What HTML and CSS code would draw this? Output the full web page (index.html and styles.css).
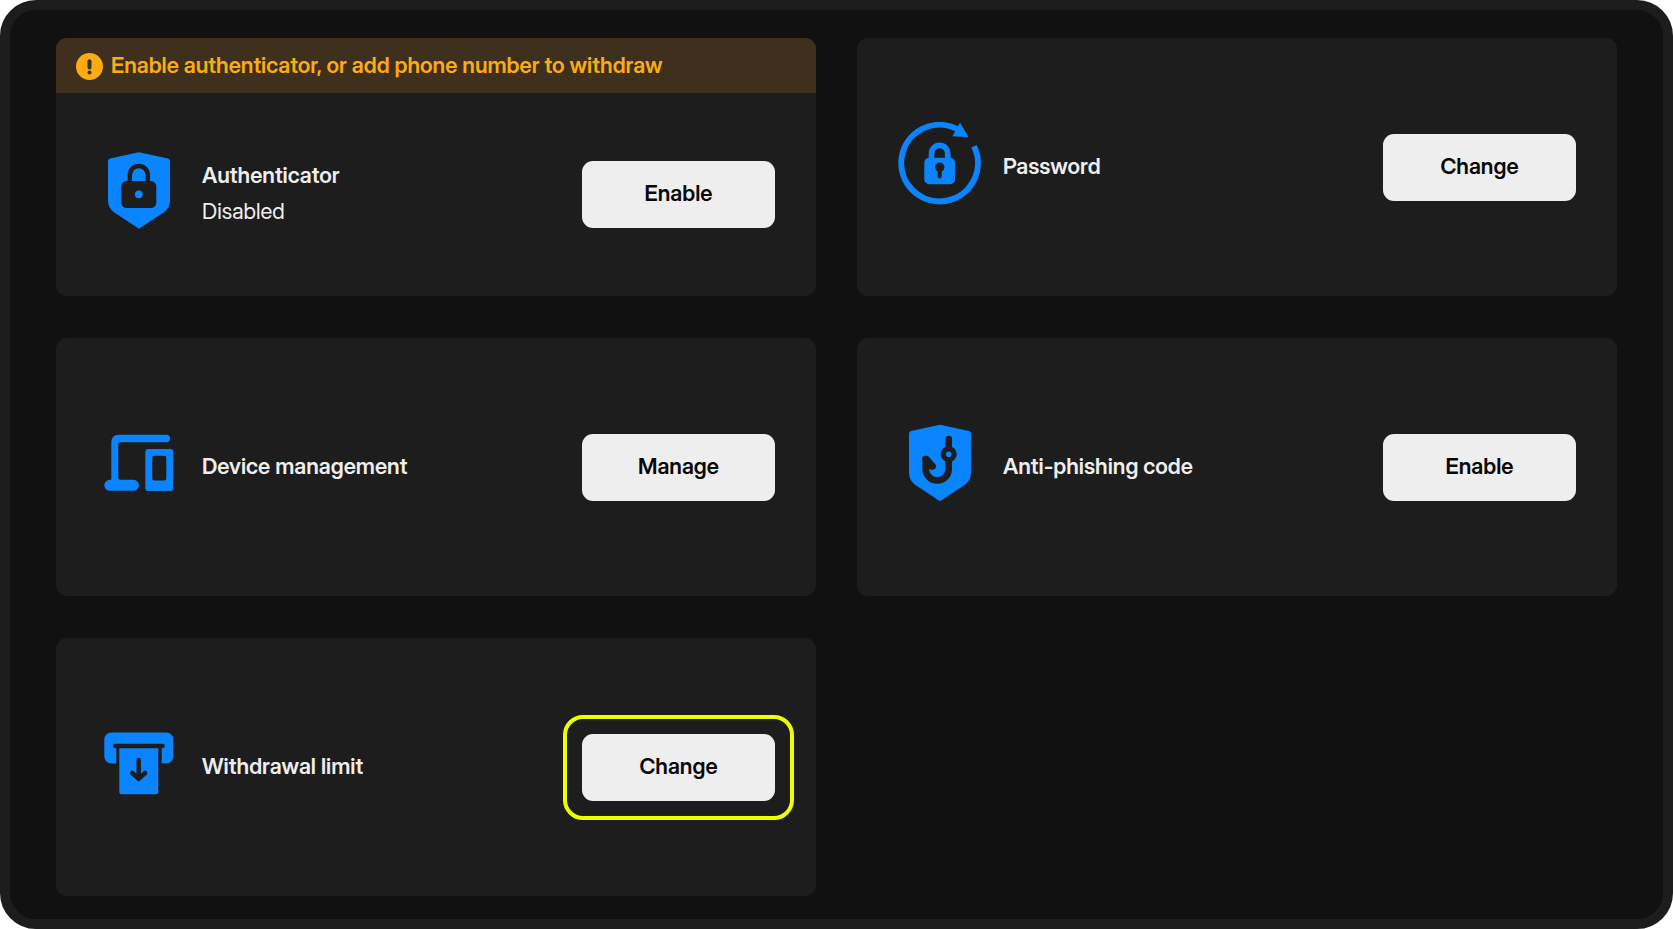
FILE: index.html
```html
<!DOCTYPE html>
<html lang="en">
<head>
    <meta charset="UTF-8">
    <meta name="viewport" content="width=device-width, initial-scale=1">
    <title>Security settings</title>
    <link rel="stylesheet" href="styles.css">
</head>
<body>
    <main class="panel">

        <section class="card">
            <div class="notice">
                <svg class="notice-icon" viewBox="0 0 27 27" aria-hidden="true">
                    <circle cx="13.5" cy="13.5" r="13.5" fill="#fcac13"/>
                    <path d="M13.5 8.2v6.2" stroke="#3f301e" stroke-width="4" stroke-linecap="round"/>
                    <circle cx="13.5" cy="19.4" r="2" fill="#3f301e"/>
                </svg>
                <span>Enable authenticator, or add phone number to withdraw</span>
            </div>
            <div class="card-body">
                <svg class="icon" viewBox="0 0 83 83" aria-hidden="true">
                    <path class="fill" d="M41.9 3.3 71 9.6q2 .6 2 2.6v39.3q0 7-6 11.8L42 79.7 17 63.3q-6-4.8-6-11.8V12.2q0-2 2-2.6z"/>
                    <path class="cut-line" stroke-width="4.4" d="M32.8 34v-8a9 9 0 0 1 18 0v8"/>
                    <rect class="cut" x="24.3" y="32" width="35" height="27" rx="5.5"/>
                    <circle class="fill" cx="41.8" cy="45.3" r="3.9"/>
                </svg>
                <div class="text">
                    <h2>Authenticator</h2>
                    <p>Disabled</p>
                </div>
                <button type="button">Enable</button>
            </div>
        </section>

        <section class="card">
            <div class="card-body">
                <svg class="icon" viewBox="0 0 83 83" aria-hidden="true">
                    <path class="line" stroke-width="6" d="M76 24.3A38.3 38.3 0 1 1 59 7"/>
                    <path class="fill" d="M62 .6 70.5 15.2 54.500 14.2z"/>
                    <path class="line" stroke-width="5.6" d="M33.5 38v-6.5a8.1 8.1 0 0 1 16.2 0V38"/>
                    <rect class="fill" x="26.3" y="35.7" width="30.7" height="26.5" rx="5"/>
                    <circle class="cut" cx="41.7" cy="45.3" r="4.7"/>
                    <path class="cut-line" stroke-width="4" d="M41.7 47v7.5"/>
                </svg>
                <div class="text">
                    <h2>Password</h2>
                </div>
                <button type="button">Change</button>
            </div>
        </section>

        <section class="card">
            <div class="card-body">
                <svg class="icon" viewBox="0 0 83 83" aria-hidden="true">
                    <path class="fill" d="M22 12.8h47.3a3.75 3.75 0 0 1 0 7.5H23.3q-2 0-2 2v33.5q0 2 2 2h13.2a5.5 5.5 0 0 1 0 11H12.8a5.5 5.5 0 0 1 0-11h1.5V20.5q0-7.7 7.7-7.7z"/>
                    <rect class="fill" x="48.3" y="27" width="28" height="42" rx="3"/>
                    <rect class="cut" x="55.3" y="33.8" width="14" height="24.7" rx="2"/>
                </svg>
                <div class="text">
                    <h2>Device management</h2>
                </div>
                <button type="button">Manage</button>
            </div>
        </section>

        <section class="card">
            <div class="card-body">
                <svg class="icon" viewBox="0 0 83 83" aria-hidden="true">
                    <path class="fill" d="M41.9 2.8 71 9.1q2 .6 2 2.6V51q0 7-6 11.8L42 79.2 17 62.8Q11 58 11 51V11.7q0-2 2-2.6z"/>
                    <path class="cut-line" stroke-width="6.7" d="M50.7 17v30a11.5 11.5 0 0 1-23 0V37"/>
                    <path class="cut" d="M24.3 37q0-3.3 3.7-3.3 1.8 0 3 1.3l6.7 7.8q1.2 2-.4 3.6-2.3 1.8-4.4 1l-2.9-.6z"/>
                    <circle class="cut" cx="50.7" cy="32.2" r="8"/>
                    <circle class="fill" cx="50.7" cy="32.2" r="2.8"/>
                </svg>
                <div class="text">
                    <h2>Anti-phishing code</h2>
                </div>
                <button type="button">Enable</button>
            </div>
        </section>

        <section class="card">
            <div class="card-body">
                <svg class="icon" viewBox="0 0 83 83" aria-hidden="true">
                    <path class="fill" d="M14.3 10.5h55a7 7 0 0 1 7 7v17a7 7 0 0 1-7 7h-4.6V26H19.3v15.5h-5a7 7 0 0 1-7-7v-17a7 7 0 0 1 7-7z"/>
                    <path class="cut-line" stroke-width="4.3" d="M18.2 24h47.4"/>
                    <path class="fill" d="M22.3 26.2h39v43.5q0 2.500-2.500 2.500h-34q-2.500 0-2.500-2.500z"/>
                    <path class="cut-line" stroke-width="4.5" d="M41.7 38v18M35.3 51l6.4 5.8 6.4-5.8"/>
                </svg>
                <div class="text">
                    <h2>Withdrawal limit</h2>
                </div>
                <button type="button" class="highlight">Change</button>
            </div>
        </section>

    </main>
</body>
</html>
```
FILE: styles.css
```css
* {
    box-sizing: border-box;
}

body {
    margin: 0;
    background: #fff;
    color: #eee;
    font-family: "Inter Display", Inter, "Liberation Sans", sans-serif;
    font-variation-settings: "opsz" 32;
    font-size: 22px;
    line-height: 36px;
}

.panel {
    display: grid;
    grid-template-columns: repeat(auto-fit, minmax(600px, 1fr));
    align-content: start;
    gap: 42px 41px;
    min-height: 100vh;
    padding: 28px 46px 22px;
    border: 10px solid #1d1d1d;
    border-radius: 36px;
    background: #111;
}

.card {
    display: flex;
    flex-direction: column;
    min-height: 258px;
    border-radius: 11px;
    background: #1d1d1d;
    overflow: hidden;
}

.notice {
    display: flex;
    align-items: center;
    gap: 8px;
    padding: 9px 20px 8px;
    background: #3f301e;
    color: #fcac13;
    font-weight: 600;
}

.notice span {
    padding-bottom: 2px;
}

.notice-icon {
    width: 27px;
    height: 27px;
    flex: none;
}

.card-body {
    display: flex;
    flex: 1;
    align-items: center;
    gap: 22px;
    padding: 0 41px;
}

.icon {
    width: 83px;
    height: 83px;
    flex: none;
    margin-bottom: 8px;
}

.fill {
    fill: #0b84ff;
}

.cut {
    fill: #1d1d1d;
}

.line {
    fill: none;
    stroke: #0b84ff;
}

.cut-line {
    fill: none;
    stroke: #1d1d1d;
    stroke-linecap: round;
    stroke-linejoin: round;
}

.text {
    flex: 1;
    padding-bottom: 3px;
}

h2,
p {
    margin: 0;
    font-size: inherit;
}

h2 {
    font-weight: 600;
}

button {
    position: relative;
    width: 193px;
    height: 67px;
    padding: 0 0 3px;
    border: 0;
    border-radius: 11px;
    background: #eee;
    color: #080808;
    font: inherit;
    font-weight: 600;
    cursor: pointer;
}

.highlight::after {
    content: "";
    position: absolute;
    inset: -19px;
    border: 4px solid #eeff00;
    border-radius: 20px;
}
```
